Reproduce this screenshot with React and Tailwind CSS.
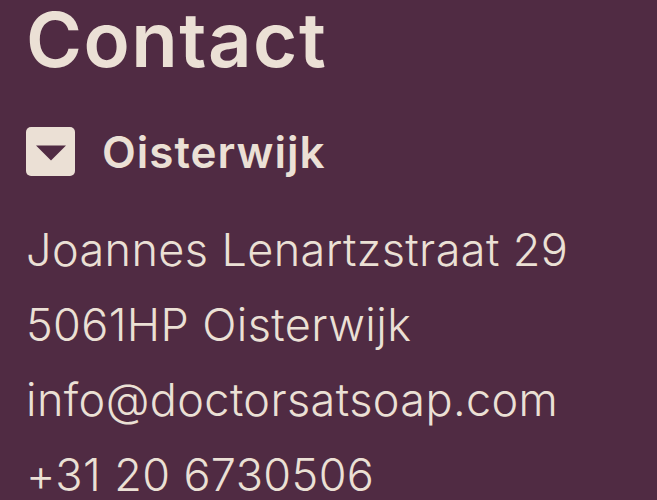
const lines = [
  'Joannes Lenartzstraat 29',
  '5061HP Oisterwijk',
  'info@doctorsatsoap.com',
  '+31 20 6730506',
];

const App = () => {
  return (
    <div className="min-h-screen bg-[#502b43] text-[#ebe0d5] pl-[26px] font-['Inter','Noto_Sans',sans-serif] overflow-hidden">
      <h2 className="text-[76px] leading-none font-semibold tracking-[1.5px] pt-px">Contact</h2>

      {/* Location toggle */}
      <div className="flex items-center gap-[27px] mt-[50px] h-[49px]">
        <div className="w-[49px] h-[49px] rounded-[5px] bg-[#ebe0d5] flex items-center justify-center pt-[3px]">
          <svg width="30" height="16" viewBox="0 0 30 16">
            <polygon points="0,0.5 30,0.5 15,15.5" fill="#502b43" />
          </svg>
        </div>
        <span className="text-[44px] font-semibold leading-none tracking-[1px]">Oisterwijk</span>
      </div>

      <div className="mt-[36px] flex flex-col">
        {lines.map((line) => (
          <p key={line} className="text-[45px] font-light leading-[75px] tracking-[0.4px]">
            {line}
          </p>
        ))}
      </div>
    </div>
  );
};

export default App;
